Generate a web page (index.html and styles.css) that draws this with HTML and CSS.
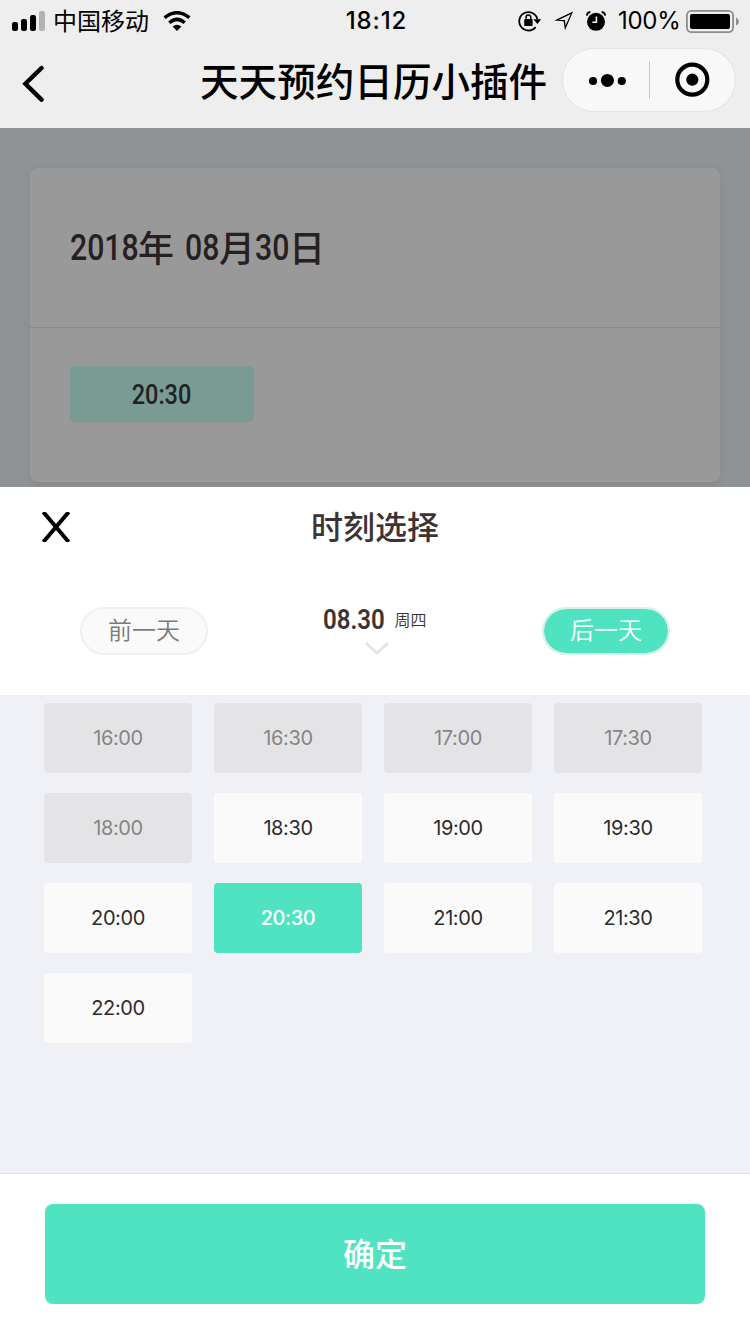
FILE: index.html
```html
<!DOCTYPE html>
<html lang="zh-CN">
<head>
<meta charset="utf-8">
<title>天天预约日历小插件</title>
<link rel="stylesheet" href="styles.css">
</head>
<body>
<div class="screen">
  <header class="top">
    <div class="status">
      <div class="status-left">
        <svg class="signal" width="33" height="20" viewBox="0 0 33 20"><rect x="0" y="11" width="6" height="9" rx="2.2"/><rect x="9" y="8" width="6" height="12" rx="2.2"/><rect x="18" y="4" width="6" height="16" rx="2.2"/><rect x="27" y="0" width="6" height="20" rx="2.2" fill="#b2b2b2"/></svg>
        <span class="carrier">中国移动</span>
        <svg class="wifi" width="28" height="20" viewBox="0 0 28 20"><path d="M1.6 6.6 Q14 -3.2 26.4 6.6" fill="none" stroke="#000" stroke-width="3.6"/><path d="M6.3 11.7 Q14 5 21.7 11.7" fill="none" stroke="#000" stroke-width="3.5"/><path d="M9.6 15.5 Q14 11.8 18.4 15.5 L14 20Z"/></svg>
      </div>
      <span class="clock">18:12</span>
      <div class="status-right">
        <svg class="lock" width="24" height="22" viewBox="0 0 24 22"><path d="M17.6 17.1 A9.2 9.2 0 1 1 19.4 9.2" fill="none" stroke="#000" stroke-width="1.8"/><path d="M15.4 9.2h7.8l-3.8 4.8Z"/><rect x="6.2" y="9" width="8.4" height="7" rx=".8"/><path d="M8 9.5V7.5a2.4 2.4 0 0 1 4.8 0v2" fill="none" stroke="#000" stroke-width="1.5"/></svg>
        <svg class="locate" width="20" height="20" viewBox="0 0 20 20"><path d="M.4 9.4 19 .6 11 19.2 9.6 10.2ZM4.6 9.1 11 9 11.5 14.6 16.7 3.2Z" fill-rule="evenodd"/></svg>
        <svg class="alarm" width="20" height="20" viewBox="0 0 20 20"><circle cx="10" cy="10.8" r="9"/><path d="M.8 4.6Q1 1.4 4.4 1M19.2 4.6Q19 1.4 15.6 1" fill="none" stroke="#000" stroke-width="1.8"/><path d="M10.4 5.6v5.6H6.3" fill="none" stroke="#eee" stroke-width="1.6"/></svg>
        <span class="percent">100%</span>
        <svg class="battery" width="53" height="23" viewBox="0 0 53 23"><rect x=".9" y=".9" width="46.2" height="21.2" rx="4.6" fill="none" stroke="#8d8d8d" stroke-width="1.8"/><rect x="4" y="4" width="40" height="15" rx="2"/><path d="M50 7.5Q53 9 53 11.5T50 15.5Z" fill="#8d8d8d"/></svg>
      </div>
    </div>
    <div class="nav">
      <svg class="back" width="22" height="37" viewBox="0 0 22 37"><path d="M19.5 3 3.4 18.8 19.5 34.6" fill="none" stroke="#000" stroke-width="4.4" stroke-linecap="round"/></svg>
      <h1 class="app-title">天天预约日历小插件</h1>
      <div class="capsule">
        <svg class="dots" width="38" height="14" viewBox="0 0 38 14"><circle cx="5" cy="8" r="4.1"/><circle cx="19.4" cy="7.4" r="6.5"/><circle cx="33.8" cy="8" r="4.1"/></svg>
        <span class="divider"></span>
        <svg class="target" width="36" height="36" viewBox="0 0 36 36"><circle cx="18.3" cy="17.7" r="15" fill="none" stroke="#000" stroke-width="4.2"/><circle cx="18.3" cy="17.7" r="6.1"/></svg>
      </div>
    </div>
  </header>

  <main class="backdrop">
    <section class="card">
      <div class="card-head"><span class="num n4"><b>2018</b></span><span class="han">年</span><span class="num n2 after-space"><b>08</b></span><span class="han">月</span><span class="num n2"><b>30</b></span><span class="han">日</span></div>
      <div class="card-body"><div class="booked"><span>20:30</span></div></div>
    </section>
  </main>

  <section class="sheet">
    <div class="sheet-head">
      <svg class="close" width="30" height="30" viewBox="0 0 30 30"><path d="M2.3 0 27.7 30M27.7 0 2.3 30" stroke="#000" stroke-width="4"/></svg>
      <h2 class="sheet-title">时刻选择</h2>
    </div>
    <div class="day-row">
      <button class="pill">前一天</button>
      <div class="day">
        <div class="day-text"><span class="date"><b>08.30</b></span><span class="week">周四</span></div>
        <svg class="chevron" width="24" height="13" viewBox="0 0 24 13"><path d="M1 1 12 11 23 1" fill="none" stroke="#e4e4e4" stroke-width="2.8"/></svg>
      </div>
      <button class="pill next">后一天</button>
    </div>
    <div class="slots">
      <div class="slot off">16:00</div><div class="slot off">16:30</div><div class="slot off">17:00</div><div class="slot off">17:30</div>
      <div class="slot off">18:00</div><div class="slot">18:30</div><div class="slot">19:00</div><div class="slot">19:30</div>
      <div class="slot">20:00</div><div class="slot on">20:30</div><div class="slot">21:00</div><div class="slot">21:30</div>
      <div class="slot">22:00</div>
    </div>
    <footer class="foot"><button class="confirm">确定</button></footer>
  </section>
</div>
</body>
</html>
```
FILE: styles.css
```css
* { box-sizing: border-box; }
body { margin: 0; background: #fff; font-family: Inter, "Noto Sans CJK SC", sans-serif; color: #000; }
h1, h2 { margin: 0; }
svg { display: block; flex: none; }
button { font: inherit; padding: 0; margin: 0; }
.screen { width: 750px; height: 1334px; display: flex; flex-direction: column; overflow: hidden; }

.top { height: 128px; background: #eee; }
.status { height: 40px; display: grid; grid-template-columns: 1fr 70px 1fr; align-items: center; }
.status-left { display: flex; align-items: center; padding-left: 12px; }
.carrier { font-size: 24px; line-height: 36px; margin-left: 8px; margin-bottom: 2px; font-family: "Noto Sans CJK SC", sans-serif; font-weight: 400; }
.wifi { margin-left: 14px; }
.clock { font-size: 24px; font-weight: 500; text-align: center; line-height: 42px; margin-left: 3px; white-space: nowrap; letter-spacing: .9px; }
.status-right { display: flex; align-items: center; justify-content: flex-end; padding-right: 11px; }
.locate { margin-left: 12px; }
.alarm { margin-left: 12px; }
.percent { font-size: 24px; font-weight: 400; line-height: 42px; margin-left: 12px; width: 62px; white-space: nowrap; letter-spacing: -.3px; }
.battery { margin-left: 6px; }

.nav { height: 88px; padding: 8px 14px 0 22px; display: flex; align-items: flex-start; }
.back { margin-top: 17px; }
.app-title { margin-left: 156px; width: 348px; font-family: "Noto Sans CJK SC", sans-serif; font-size: 38.6px; font-weight: 500; line-height: 62px; white-space: nowrap; }
.capsule { margin-left: 14px; width: 174px; height: 64px; border: 1px solid #e4e4e4; border-radius: 32px; background: #f8f8f8; display: flex; align-items: center; padding-left: 25px; }
.divider { width: 1px; height: 38px; background: #c8c8c8; margin-left: 23px; }
.target { margin-left: 24px; }

.backdrop { height: 359px; padding: 40px 30px 0; background: #909396; overflow: hidden; }
.card { height: 314px; border-radius: 8px; background: #999; box-shadow: 0 2px 8px rgba(0, 0, 0, .08); }
.card-head { height: 160px; border-bottom: 1px solid #8a8a8a; padding: 0 40px; display: flex; align-items: center; font-size: 36px; line-height: 54px; font-weight: 500; color: #272020; }
.num, .date { display: block; font-family: Roboto, sans-serif; }
.num b, .date b, .booked span { display: block; width: max-content; font-family: Roboto, sans-serif; font-weight: 500; transform: scaleX(.84); transform-origin: 0 50%; }
.num { padding-top: 1px; }
.n4 { width: 68px; }
.n2 { width: 34px; }
.after-space { margin-left: 11px; }
.han { width: 36px; padding-bottom: 4px; font-family: "Noto Sans CJK SC", sans-serif; }
.card-body { padding: 38px 40px; }
.booked { width: 184px; height: 56px; border-radius: 4px; background: #799b94; display: flex; justify-content: center; font-size: 28px; line-height: 57px; color: #222; }
.booked span { transform-origin: 50% 50%; }

.sheet { height: 847px; background: #fff; }
.sheet-head { height: 80px; display: grid; grid-template-columns: 72px 1fr 72px; align-items: center; }
.close { margin-left: 41px; }
.sheet-title { font-family: "Noto Sans CJK SC", sans-serif; font-size: 32px; font-weight: 500; line-height: 76px; padding-bottom: 4px; text-align: center; color: #3e3333; }
.day-row { height: 128px; padding: 40px 80px 0; display: grid; grid-template-columns: 128px 1fr 128px; align-items: start; }
.pill { width: 128px; height: 48px; border: 2px solid #f0f0f0; border-radius: 24px; background: #fafafa; color: #7b7b7b; font-family: "Noto Sans CJK SC", sans-serif; font-size: 24px; font-weight: 350; line-height: 40px; padding-bottom: 4px; }
.next { background: #50e3c2; background-clip: padding-box; border-color: #d9efea; color: #fff; }
.day { display: flex; flex-direction: column; align-items: center; }
.day-text { display: flex; align-items: center; height: 24px; color: #3e3333; }
.date { width: 61px; font-size: 28px; line-height: 24px; margin-right: 10px; padding-top: 2px; }
.date b { transform: scaleX(.86); font-weight: 600; }
.week { font-family: "Noto Sans CJK SC", sans-serif; font-size: 16px; font-weight: 350; line-height: 22px; padding-bottom: 1px; }
.chevron { margin: 11px 0 0 4px; }

.slots { height: 478px; background: #f0f1f6; padding: 8px 48px 0 44px; display: grid; grid-template-columns: repeat(4, 148px); grid-auto-rows: 70px; gap: 20px 22px; }
.slot { border-radius: 4px; background: #fafafa; text-align: center; font-size: 20px; line-height: 71px; letter-spacing: -.4px; color: #2c2c2c; }
.off { background: #e4e4e6; color: #858585; }
.on { background: #50e3c2; color: #fff; font-weight: 500; }

.foot { height: 161px; border-top: 1px solid #e4e4e7; padding: 30px 45px; }
.confirm { display: block; width: 660px; height: 100px; border: 0; border-radius: 8px; background: #50e3c2; color: #fff; font-family: "Noto Sans CJK SC", sans-serif; font-size: 32px; font-weight: 500; line-height: 96px; padding-bottom: 4px; }
```
